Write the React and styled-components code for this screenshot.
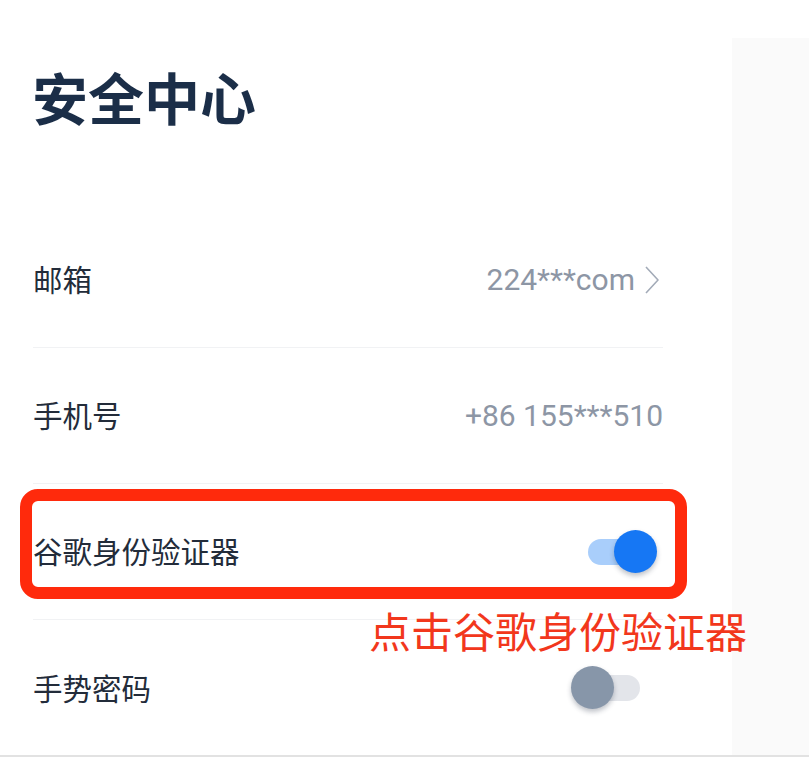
import React from "react";
import styled, { createGlobalStyle } from "styled-components";

const GlobalStyle = createGlobalStyle`
  body {
    margin: 0;
    background: #ffffff;
    font-family: "Noto Sans CJK SC", "Noto Sans", sans-serif;
  }
`;

const Screen = styled.div`
  display: flex;
  height: 757px;
  border-bottom: 2px solid #e2e2e2;
  box-sizing: border-box;
  background: #ffffff;
`;

const Main = styled.div`
  width: 732px;
  padding: 62px 0 0 32px;
  box-sizing: border-box;
`;

const Side = styled.div`
  flex: 1;
  margin-top: 38px;
  background: #fafafa;
`;

const Title = styled.h1`
  margin: 0;
  font-size: 56px;
  line-height: 68px;
  font-weight: 700;
  color: #1b2e48;
`;

const List = styled.div`
  margin-top: 82px;
  margin-left: 1px;
  width: 630px;
`;

const Row = styled.div`
  position: relative;
  display: flex;
  align-items: center;
  justify-content: space-between;
  height: 136px;
  box-sizing: border-box;
  border-bottom: ${(p) => (p.$last ? "none" : "1px solid #f1f2f4")};
`;

const Label = styled.span`
  font-size: 29.5px;
  line-height: 36px;
  margin-top: -3px;
  color: #232c3a;
`;

const Value = styled.span`
  display: flex;
  align-items: center;
  gap: 9px;
  font-family: Roboto, "Liberation Sans", sans-serif;
  font-size: 30px;
  color: #8d96a5;
  margin-right: ${(p) => (p.$arrow ? "3px" : "0")};
`;

const Switch = styled.span`
  position: relative;
  width: 52px;
  height: 26px;
  margin-right: 23px;
  border-radius: 13px;
  background: ${(p) => (p.$on ? "#a9cefb" : "#e3e5ea")};
`;

const Knob = styled.span`
  position: absolute;
  top: 50%;
  ${(p) => (p.$on ? "right: -17px;" : "left: -17px;")}
  width: 43px;
  height: 43px;
  margin-top: -22px;
  border-radius: 50%;
  background: ${(p) => (p.$on ? "#1677f4" : "#8796a9")};
  box-shadow: 0 3px 5px rgba(30, 40, 60, 0.28);
`;

const Highlight = styled.div`
  position: absolute;
  left: -13px;
  top: 5px;
  width: 667px;
  height: 110px;
  box-sizing: border-box;
  border: 12px solid #ff2a0c;
  border-radius: 18px;
  pointer-events: none;
`;

const Note = styled.div`
  position: absolute;
  left: 336px;
  top: 122px;
  font-size: 42px;
  line-height: 48px;
  color: #f2371c;
  white-space: nowrap;
`;

const Chevron = () => (
  <svg width="16" height="30" viewBox="0 0 16 30">
    <polyline
      points="2,2 14,15 2,28"
      fill="none"
      stroke="#a3abb8"
      strokeWidth="1.6"
      strokeLinejoin="round"
    />
  </svg>
);

const Toggle = ({ on }) => (
  <Switch $on={on}>
    <Knob $on={on} />
  </Switch>
);

export default function App() {
  return (
    <>
      <GlobalStyle />
      <Screen>
        <Main>
          <Title>安全中心</Title>
          <List>
            <Row>
              <Label>邮箱</Label>
              <Value $arrow>
                224***com
                <Chevron />
              </Value>
            </Row>
            <Row>
              <Label>手机号</Label>
              <Value>+86 155***510</Value>
            </Row>
            <Row>
              <Label>谷歌身份验证器</Label>
              <Toggle on />
              <Highlight />
              <Note>点击谷歌身份验证器</Note>
            </Row>
            <Row $last>
              <Label>手势密码</Label>
              <Toggle on={false} />
            </Row>
          </List>
        </Main>
        <Side />
      </Screen>
    </>
  );
}
